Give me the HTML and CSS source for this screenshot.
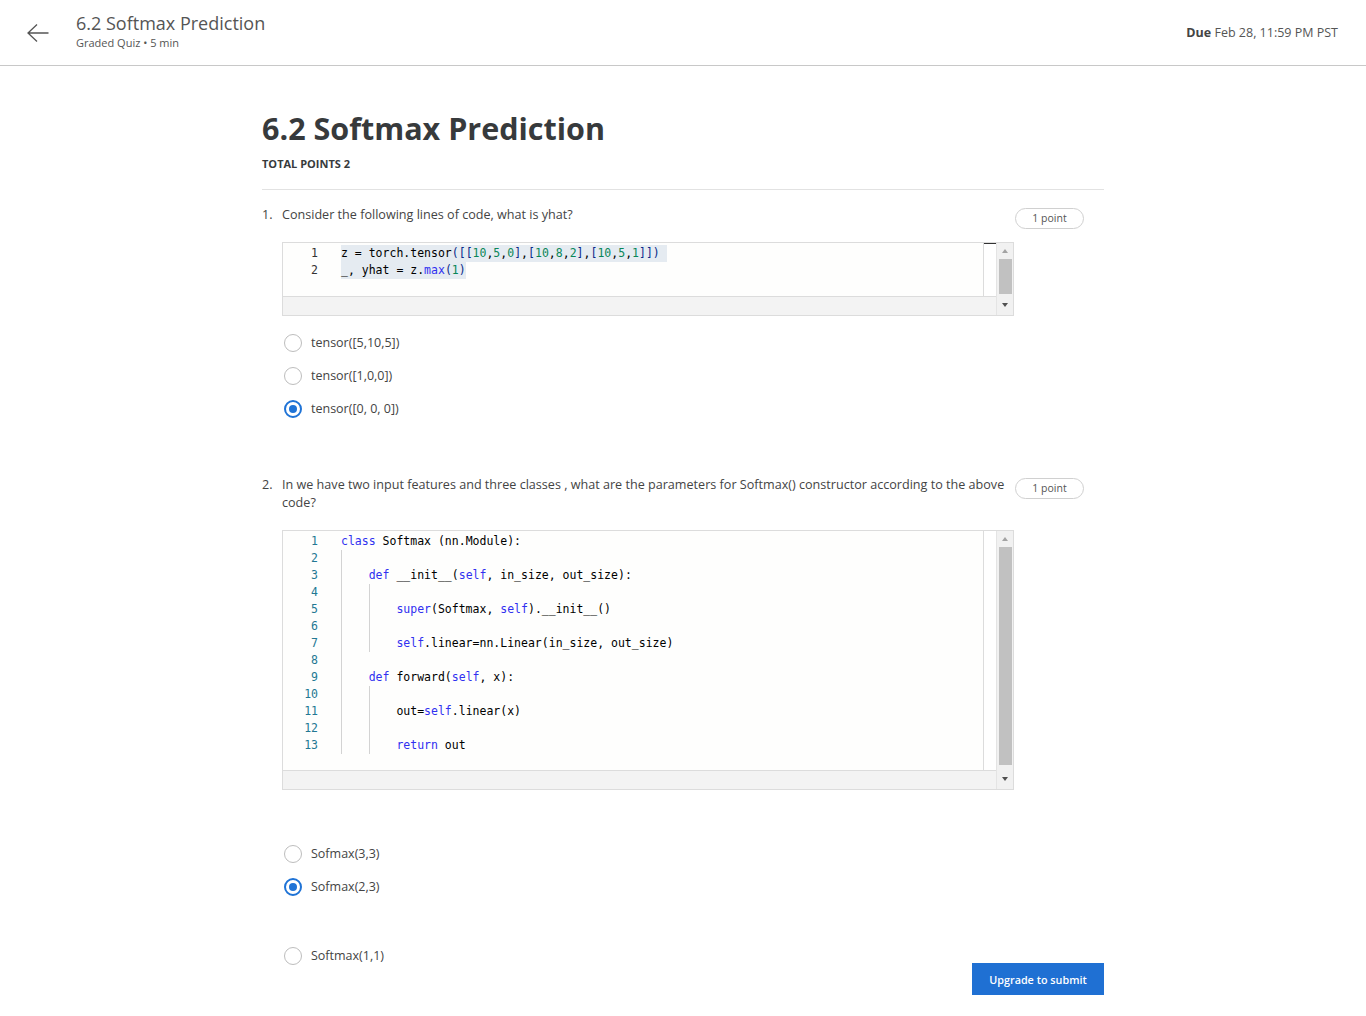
FILE: index.html
```html
<!DOCTYPE html>
<html lang="en">
<head>
<meta charset="utf-8">
<title>6.2 Softmax Prediction</title>
<link rel="stylesheet" href="styles.css">
</head>
<body>
<header class="topbar">
  <div class="top-left">
    <svg class="back" width="24" height="20" viewBox="0 0 24 20" aria-hidden="true">
      <path d="M22.5 10 H2 M11 1.5 L2 10 L11 18.5" fill="none" stroke="#555" stroke-width="1.3"/>
    </svg>
    <div class="top-titles">
      <div class="top-title">6.2 Softmax Prediction</div>
      <div class="top-sub">Graded Quiz • 5 min</div>
    </div>
  </div>
  <div class="due"><b>Due</b> Feb 28, 11:59 PM PST</div>
</header>

<main class="content">
  <h1 class="title">6.2 Softmax Prediction</h1>
  <div class="total">TOTAL POINTS 2</div>
  <hr class="rule">

  <section class="question q1">
    <div class="q-head">
      <span class="q-num">1.</span>
      <p class="q-text">Consider the following lines of code, what is yhat?</p>
      <span class="pill">1 point</span>
    </div>
    <div class="code">
      <div class="code-main">
        <div class="code-row">
          <div class="editor short">
            <div class="line"><span class="ln dark">1</span><span class="src"><span class="sel sel-nl">z = torch.tensor<span class="br">([[</span><span class="num">10</span>,<span class="num">5</span>,<span class="num">0</span><span class="br">]</span>,<span class="br">[</span><span class="num">10</span>,<span class="num">8</span>,<span class="num">2</span><span class="br">]</span>,<span class="br">[</span><span class="num">10</span>,<span class="num">5</span>,<span class="num">1</span><span class="br">]])</span></span></span></div>
            <div class="line"><span class="ln dark">2</span><span class="src"><span class="sel">_, yhat = z.<span class="kw">max</span><span class="br">(</span><span class="num">1</span><span class="br">)</span></span></span></div>
          </div>
          <div class="gap cursor"></div>
        </div>
        <div class="hbar"></div>
      </div>
      <div class="vscroll">
        <span class="arr up"></span>
        <span class="thumb"></span>
        <span class="arr down"></span>
      </div>
    </div>
    <ul class="options">
      <li class="opt"><span class="radio"></span><span>tensor([5,10,5])</span></li>
      <li class="opt"><span class="radio"></span><span>tensor([1,0,0])</span></li>
      <li class="opt"><span class="radio on"></span><span>tensor([0, 0, 0])</span></li>
    </ul>
  </section>

  <section class="question q2">
    <div class="q-head">
      <span class="q-num">2.</span>
      <p class="q-text">In we have two input features and three classes , what are the parameters for Softmax() constructor according to the above code?</p>
      <span class="pill">1 point</span>
    </div>
    <div class="code">
      <div class="code-main">
        <div class="code-row">
          <div class="editor tall">
            <div class="line"><span class="ln">1</span><span class="src"><span class="kw">class</span> Softmax (nn.Module):</span></div>
            <div class="line"><span class="ln">2</span><span class="src"><span class="g"></span></span></div>
            <div class="line"><span class="ln">3</span><span class="src"><span class="g"></span><span class="kw">def</span> __init__(<span class="kw">self</span>, in_size, out_size):</span></div>
            <div class="line"><span class="ln">4</span><span class="src"><span class="g"></span><span class="g"></span></span></div>
            <div class="line"><span class="ln">5</span><span class="src"><span class="g"></span><span class="g"></span><span class="kw">super</span>(Softmax, <span class="kw">self</span>).__init__()</span></div>
            <div class="line"><span class="ln">6</span><span class="src"><span class="g"></span><span class="g"></span></span></div>
            <div class="line"><span class="ln">7</span><span class="src"><span class="g"></span><span class="g"></span><span class="kw">self</span>.linear=nn.Linear(in_size, out_size)</span></div>
            <div class="line"><span class="ln">8</span><span class="src"><span class="g"></span></span></div>
            <div class="line"><span class="ln">9</span><span class="src"><span class="g"></span><span class="kw">def</span> forward(<span class="kw">self</span>, x):</span></div>
            <div class="line"><span class="ln">10</span><span class="src"><span class="g"></span><span class="g"></span></span></div>
            <div class="line"><span class="ln">11</span><span class="src"><span class="g"></span><span class="g"></span>out=<span class="kw">self</span>.linear(x)</span></div>
            <div class="line"><span class="ln">12</span><span class="src"><span class="g"></span><span class="g"></span></span></div>
            <div class="line"><span class="ln">13</span><span class="src"><span class="g"></span><span class="g"></span><span class="kw">return</span> out</span></div>
          </div>
          <div class="gap"></div>
        </div>
        <div class="hbar"></div>
      </div>
      <div class="vscroll tall-scroll">
        <span class="arr up"></span>
        <span class="thumb"></span>
        <span class="arr down"></span>
      </div>
    </div>
    <ul class="options options2">
      <li class="opt"><span class="radio"></span><span>Sofmax(3,3)</span></li>
      <li class="opt"><span class="radio on"></span><span>Sofmax(2,3)</span></li>
    </ul>
    <div class="last-row">
      <div class="opt"><span class="radio"></span><span>Softmax(1,1)</span></div>
      <button class="submit" type="button">Upgrade to submit</button>
    </div>
  </section>
</main>
</body>
</html>
```

FILE: styles.css
```css
* { box-sizing: border-box; }

html, body {
  margin: 0;
  padding: 0;
  background: #fff;
  font-family: "Open Sans", "Liberation Sans", sans-serif;
  color: #333;
}

/* ---------- top bar ---------- */
.topbar {
  height: 66px;
  border-bottom: 1px solid #c8c8c8;
  display: flex;
  align-items: flex-start;
  justify-content: space-between;
  padding: 0 28px 0 26px;
}
.top-left {
  display: flex;
  align-items: flex-start;
}
.back {
  margin-top: 23px;
}
.top-titles {
  margin-left: 26px;
  padding-top: 11px;
}
.top-title {
  font-size: 18px;
  line-height: 24px;
  color: #555;
}
.top-sub {
  font-size: 11px;
  line-height: 16px;
  color: #555;
}
.due {
  margin-top: 24px;
  font-size: 12.5px;
  line-height: 18px;
  color: #555;
}
.due b {
  color: #444;
  font-weight: 700;
}

/* ---------- content ---------- */
.content {
  width: 842px;
  margin: 0 auto;
  padding-top: 42px;
}
.title {
  margin: 0;
  font-size: 30.5px;
  line-height: 40px;
  font-weight: 700;
  color: #373a3c;
}
.total {
  margin-top: 8px;
  font-size: 11px;
  line-height: 16px;
  font-weight: 700;
  color: #373a3c;
}
.rule {
  margin: 17px 0 0;
  border: 0;
  border-top: 1px solid #e2e2e2;
}

.question { margin: 0; }
.q1 { padding-top: 16px; }
.q2 { padding-top: 51px; }

.q-head {
  display: flex;
  align-items: flex-start;
  font-size: 12.6px;
  line-height: 18px;
  color: #444;
}
.q-num {
  width: 20px;
  flex: none;
}
.q-text {
  margin: 0;
  flex: 1;
}
.pill {
  flex: none;
  width: 69px;
  height: 21px;
  margin: 2px 20px -5px 10px;
  border: 1px solid #d0d0d0;
  border-radius: 11px;
  font-size: 10.5px;
  line-height: 19px;
  text-align: center;
  color: #555;
}

/* ---------- code editor ---------- */
.code {
  margin: 18px 0 0 20px;
  width: 732px;
  border: 1px solid #dcdcdc;
  display: flex;
  background: #fff;
}
.code-main {
  flex: 1;
  display: flex;
  flex-direction: column;
}
.code-row {
  display: flex;
}
.editor {
  flex: 1;
  border-right: 1px solid #dcdcdc;
  background: #fefefd;
  padding-top: 2px;
}
.editor.short { height: 53px; }
.editor.tall { height: 239px; padding-top: 2px; }
.gap {
  width: 12px;
  flex: none;
  background: #fff;
}
.gap.cursor {
  border-top: 1px solid #333;
}
.hbar {
  height: 19px;
  border-top: 1px solid #dcdcdc;
  background: #f3f3f3;
}
.vscroll {
  width: 17px;
  flex: none;
  background: #f1f1f1;
  border-left: 1px solid #e4e4e4;
  display: flex;
  flex-direction: column;
  align-items: center;
  padding: 0 1px;
}
.arr {
  display: block;
  width: 0;
  height: 0;
  border-left: 3.5px solid transparent;
  border-right: 3.5px solid transparent;
}
.arr.up {
  border-bottom: 4px solid #a3a3a3;
  margin: 6px 0 6px;
}
.arr.down {
  border-top: 4px solid #505050;
  margin: 9px 0 8px;
}
.tall-scroll .arr.down {
  margin-top: 12px;
}
.thumb {
  display: block;
  width: 13px;
  flex: 1;
  background: #c1c1c1;
}

.line {
  display: flex;
  height: 17px;
  font-family: "DejaVu Sans Mono", "Liberation Mono", monospace;
  font-size: 11.5px;
  line-height: 17px;
  color: #000;
  white-space: pre;
}
.ln {
  width: 58px;
  flex: none;
  padding-right: 23px;
  text-align: right;
  color: #237893;
}
.ln.dark { color: #333; }
.src { display: flex; }
.sel { background: #e5ebf1; }
.sel-nl { padding-right: 7px; }
.num { color: #098658; }
.kw { color: #3030f0; }
.br { color: #0a2a8a; }
.g {
  display: inline-block;
  width: 4ch;
  height: 17px;
  background: linear-gradient(#d3d3d3, #d3d3d3) 0 0 / 1px 100% no-repeat;
}

/* ---------- options ---------- */
.options {
  list-style: none;
  margin: 10px 0 0 22px;
  padding: 0;
}
.options2 { margin-top: 47px; }
.opt {
  display: flex;
  align-items: center;
  height: 33px;
  font-size: 12.5px;
  color: #444;
}
.radio {
  width: 18px;
  height: 18px;
  border: 1.5px solid #bdbdbd;
  border-radius: 50%;
  margin-right: 9px;
  flex: none;
  position: relative;
  background: #fff;
}
.radio.on {
  border: 2px solid #1f73d6;
}
.radio.on::after {
  content: "";
  position: absolute;
  left: 3px;
  top: 3px;
  width: 8px;
  height: 8px;
  border-radius: 50%;
  background: #1f73d6;
}

.last-row {
  display: flex;
  align-items: flex-start;
  justify-content: space-between;
  margin: 36px 0 0 22px;
}
.submit {
  margin-top: 24px;
  width: 132px;
  height: 32px;
  border: 0;
  background: #1f70d3;
  color: #fff;
  font-family: "Open Sans", "Liberation Sans", sans-serif;
  font-size: 10.8px;
  font-weight: 600;
  padding: 0;
  cursor: pointer;
}
```
